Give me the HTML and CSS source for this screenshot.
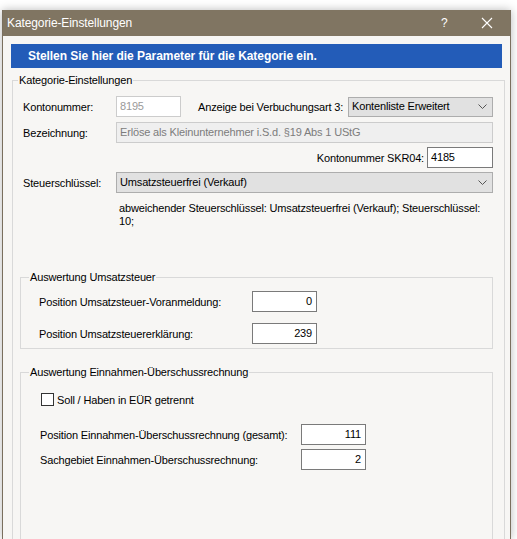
FILE: index.html
```html
<!DOCTYPE html>
<html lang="de">
<head>
<meta charset="utf-8">
<title>Kategorie-Einstellungen</title>
<link rel="stylesheet" href="styles.css">
</head>
<body>
<div class="window">
  <div class="titlebar">
    <span class="title">Kategorie-Einstellungen</span>
    <span class="help">?</span>
    <svg class="close" width="12" height="12" viewBox="0 0 12 12"><path d="M1 1 L11 11 M11 1 L1 11" stroke="#fff" stroke-width="1.1" fill="none"/></svg>
  </div>
  <div class="banner">Stellen Sie hier die Parameter für die Kategorie ein.</div>

  <fieldset class="group outer">
    <legend>Kategorie-Einstellungen</legend>

    <div class="row r1">
      <span class="label lbl-main">Kontonummer:</span>
      <div class="box disabled w65">8195</div>
      <span class="label lbl-anz">Anzeige bei Verbuchungsart 3:</span>
      <div class="box select w145"><span>Kontenliste Erweitert</span>
        <svg class="chev" width="9" height="5" viewBox="0 0 9 5"><path d="M0.5 0.5 L4.5 4.5 L8.5 0.5" stroke="#555" fill="none"/></svg>
      </div>
    </div>

    <div class="row r2">
      <span class="label lbl-main">Bezeichnung:</span>
      <div class="box readonly wfull">Erlöse als Kleinunternehmer i.S.d. §19 Abs 1 UStG</div>
    </div>

    <div class="row r3">
      <span class="label lbl-skr">Kontonummer SKR04:</span>
      <div class="box edit w66">4185</div>
    </div>

    <div class="row r4">
      <span class="label lbl-main">Steuerschlüssel:</span>
      <div class="box select wfull"><span>Umsatzsteuerfrei (Verkauf)</span>
        <svg class="chev" width="9" height="5" viewBox="0 0 9 5"><path d="M0.5 0.5 L4.5 4.5 L8.5 0.5" stroke="#555" fill="none"/></svg>
      </div>
    </div>

    <p class="note">abweichender Steuerschlüssel: Umsatzsteuerfrei (Verkauf); Steuerschlüssel: 10;</p>

    <fieldset class="group inner ust">
      <legend>Auswertung Umsatzsteuer</legend>
      <div class="row i1">
        <span class="label lbl-ust">Position Umsatzsteuer-Voranmeldung:</span>
        <div class="box edit num w65">0</div>
      </div>
      <div class="row i2">
        <span class="label lbl-ust">Position Umsatzsteuererklärung:</span>
        <div class="box edit num w65">239</div>
      </div>
    </fieldset>

    <fieldset class="group inner eur">
      <legend>Auswertung Einnahmen-Überschussrechnung</legend>
      <div class="check">
        <span class="checkbox"></span>
        <span class="label">Soll / Haben in EÜR getrennt</span>
      </div>
      <div class="row e1">
        <span class="label lbl-eur">Position Einnahmen-Überschussrechnung (gesamt):</span>
        <div class="box edit num w65">111</div>
      </div>
      <div class="row e2">
        <span class="label lbl-eur">Sachgebiet Einnahmen-Überschussrechnung:</span>
        <div class="box edit num w65">2</div>
      </div>
    </fieldset>
  </fieldset>
</div>
</body>
</html>
```

FILE: styles.css
```css
html, body {
  margin: 0;
  padding: 0;
  height: 539px;
  overflow: hidden;
  background: #ffffff;
}
body {
  font-family: "Liberation Sans", Arial, sans-serif;
  font-size: 11px;
  letter-spacing: -0.16px;
  color: #000;
}
.window {
  margin: 10px 0 0 2px;
  width: 507px;
  height: 529px;
  border-left: 1px solid #7a6f5e;
  border-right: 1px solid #7a6f5e;
  background: #f7f6f4;
  box-shadow: 0 0 9px rgba(0,0,0,0.28);
  overflow: hidden;
}
.titlebar {
  height: 26px;
  background: #807562;
  color: #fff;
  display: flex;
  align-items: center;
  padding-left: 4px;
  letter-spacing: 0;
}
.title {
  font-size: 12px;
  flex: 1;
  letter-spacing: -0.1px;
}
.help {
  font-size: 12px;
  width: 10px;
  margin-right: 30px;
}
.close {
  margin-right: 17px;
}
.banner {
  margin: 8px 8px 0 8px;
  height: 24px;
  background: #235cb8;
  color: #fff;
  font-weight: bold;
  font-size: 12px;
  letter-spacing: -0.05px;
  line-height: 24px;
  padding-left: 17px;
}
.group {
  border: 1px solid #d9d9d9;
  padding: 0;
  margin: 0;
  min-width: 0;
}
.group legend {
  padding: 0 1px;
  line-height: 14px;
}
.outer {
  margin: 5px 5px 0 9px;
  height: 560px;
  border-bottom: none;
}
.outer > legend {
  margin-left: 5px;
}
.row {
  display: flex;
  align-items: center;
  height: 21px;
}
.label {
  white-space: nowrap;
}
.lbl-main {
  width: 93px;
  margin-left: 10px;
  flex: none;
}
.lbl-anz {
  margin-left: 17px;
  flex: 1;
}
.lbl-skr {
  margin-left: auto;
  margin-right: 3px;
}
.box {
  box-sizing: border-box;
  height: 21px;
  border: 1px solid #7a7a7a;
  background: #fff;
  line-height: 19px;
  padding: 0 3px;
  white-space: nowrap;
  overflow: hidden;
  flex: none;
}
.box.disabled {
  border-color: #cccccc;
  color: #9a9a9a;
}
.box.readonly {
  border-color: #cccccc;
  background: #efefef;
  color: #7c7c7c;
}
.box.select {
  background: #e1e1e1;
  border-color: #adadad;
  display: flex;
  align-items: center;
  justify-content: space-between;
  padding-right: 5px;
  height: 20px;
}
.box.num {
  text-align: right;
  padding-right: 4px;
}
.w65 { width: 65px; }
.w66 { width: 66px; }
.w145 { width: 145px; }
.wfull { width: 377px; }
.r1 { margin: 9px 11px 0 0; }
.r2 { margin: 5px 11px 0 0; }
.r3 { margin: 4px 11px 0 0; }
.r4 { margin: 4px 11px 0 0; }
.r4 .box { height: 21px; }
.note {
  margin: 9px 8px 0 106px;
  line-height: 13px;
}
.inner {
  margin: 0 11px 0 7px;
}
.inner > legend {
  margin-left: 8px;
}
.ust {
  margin-top: 42px;
  height: 79px;
  box-sizing: border-box;
}
.lbl-ust {
  width: 213px;
  margin-left: 18px;
  flex: none;
}
.i1 { margin-top: 7px; }
.i2 { margin-top: 11px; }
.eur {
  margin-top: 16px;
  height: 300px;
  border-bottom: none;
}
.check {
  display: flex;
  align-items: center;
  margin: 14px 0 0 20px;
  height: 13px;
}
.checkbox {
  box-sizing: border-box;
  width: 13px;
  height: 13px;
  border: 1px solid #333;
  background: #fff;
  margin-right: 3px;
}
.lbl-eur {
  width: 261px;
  margin-left: 19px;
  flex: none;
}
.e1 { margin-top: 18px; }
.e2 { margin-top: 4px; }
```
